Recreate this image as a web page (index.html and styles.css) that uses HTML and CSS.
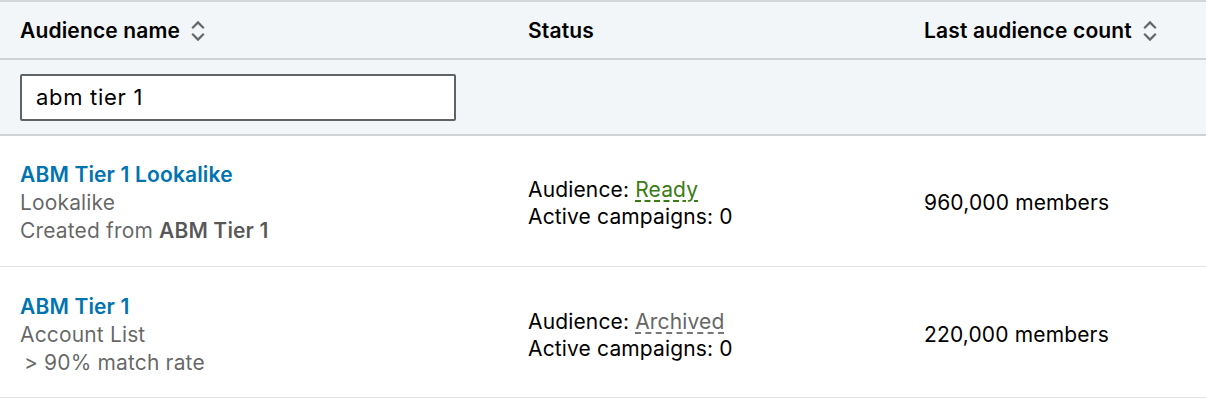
FILE: index.html
```html
<!DOCTYPE html>
<html>
<head>
<meta charset="utf-8">
<link rel="stylesheet" href="styles.css">
</head>
<body>
<table class="tbl">
  <colgroup>
    <col class="w1">
    <col class="w2">
    <col class="w3">
  </colgroup>
  <thead>
    <tr class="head-row">
      <th><span class="th-in">Audience name <svg class="sort" width="16" height="22" viewBox="0 0 16 22"><path d="M2.2 8.2 L8 2.4 L13.8 8.2" fill="none" stroke="#666" stroke-width="2.2"/><path d="M2.2 13.8 L8 19.6 L13.8 13.8" fill="none" stroke="#666" stroke-width="2.2"/></svg></span></th>
      <th>Status</th>
      <th><span class="th-in">Last audience count <svg class="sort" width="16" height="22" viewBox="0 0 16 22"><path d="M2.2 8.2 L8 2.4 L13.8 8.2" fill="none" stroke="#666" stroke-width="2.2"/><path d="M2.2 13.8 L8 19.6 L13.8 13.8" fill="none" stroke="#666" stroke-width="2.2"/></svg></span></th>
    </tr>
    <tr class="filter-row">
      <th><input class="search" type="text" value="abm tier 1"></th>
      <th></th>
      <th></th>
    </tr>
  </thead>
  <tbody>
    <tr class="row">
      <td>
        <div class="name">ABM Tier 1 Lookalike</div>
        <div class="sub">Lookalike</div>
        <div class="sub">Created from <b>ABM Tier 1</b></div>
      </td>
      <td>
        <div class="st">Audience: <span class="ready">Ready</span></div>
        <div class="st">Active campaigns: 0</div>
      </td>
      <td class="count">960,000 members</td>
    </tr>
    <tr class="row row2">
      <td>
        <div class="name">ABM Tier 1</div>
        <div class="sub">Account List</div>
        <div class="sub"><span class="gt">&gt;</span> 90% match rate</div>
      </td>
      <td>
        <div class="st">Audience: <span class="archived">Archived</span></div>
        <div class="st">Active campaigns: 0</div>
      </td>
      <td class="count">220,000 members</td>
    </tr>
  </tbody>
</table>
</body>
</html>
```

FILE: styles.css
```css
html, body {
  margin: 0;
  padding: 0;
  background: #fff;
}
body {
  font-family: Inter, "Liberation Sans", Arial, sans-serif;
  color: #000;
}
.tbl {
  width: 1206px;
  border-collapse: collapse;
  table-layout: fixed;
  border-top: 2px solid #d3d6d9;
}
.w1 { width: 508px; }
.w2 { width: 396px; }
.w3 { width: 302px; }
th, td {
  text-align: left;
  padding: 0 20px;
  vertical-align: middle;
}
.head-row th {
  background: #f3f6f8;
  height: 55px;
  font-size: 21px;
  font-weight: 600;
  color: #000;
  border-bottom: 2px solid #d0d3d6;
  padding-top: 1px;
  letter-spacing: 0.15px;
}
.th-in {
  display: inline-flex;
  align-items: center;
  gap: 10px;
}
.sort { display: block; }
.filter-row th {
  background: #f3f6f8;
  height: 74px;
  border-bottom: 2px solid #d0d3d6;
}
.search {
  display: block;
  box-sizing: border-box;
  width: 436px;
  height: 47px;
  margin: 0;
  border: 2px solid #5f6366;
  border-radius: 2px;
  padding: 0 14px;
  font-family: Inter, "Liberation Sans", Arial, sans-serif;
  font-size: 22px;
  letter-spacing: 0.7px;
  color: #000;
  background: #fff;
  outline: none;
}
.row td {
  height: 127px;
  padding-top: 3px;
  border-bottom: 1px solid #e1e4e6;
  font-size: 21px;
  letter-spacing: 0.15px;
}
.row2 td {
  padding-top: 5px;
  height: 125px;
}
.name {
  color: #0073b1;
  font-weight: 600;
  line-height: 28px;
}
.sub {
  color: rgba(0,0,0,0.62);
  line-height: 28px;
}
.gt { margin-left: 4px; }
.sub b { color: rgba(0,0,0,0.66); font-weight: 600; }
.st {
  line-height: 27px;
  color: #000;
}
.ready {
  color: #3a7b14;
  text-decoration: underline dashed #3a7b14;
  text-underline-offset: 4px;
}
.archived {
  color: #666;
  text-decoration: underline dashed #777;
  text-underline-offset: 4px;
}
```
